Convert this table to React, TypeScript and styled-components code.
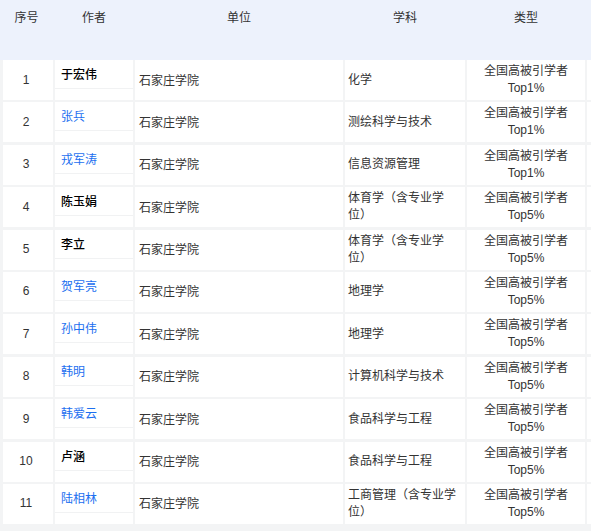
import React from "react";
import styled, { createGlobalStyle } from "styled-components";

const Global = createGlobalStyle`
  html, body { margin: 0; padding: 0; background: #f3f4f5; }
  body {
    font-family: "Liberation Sans", "Noto Sans CJK SC", sans-serif;
    font-size: 12px;
    color: #333;
    text-spacing-trim: space-all;
  }
`;

const COLS = "50px 78px 208px 120px 118px 1fr";

const Table = styled.div`
  width: 591px;
  display: flex;
  flex-direction: column;
  gap: 2.4px;
  background: #f3f4f5;
  padding-bottom: 6px;
`;

const HeaderRow = styled.div`
  display: grid;
  grid-template-columns: ${COLS};
  column-gap: 2px;
  padding-left: 3px;
  height: 60px;
  background: #edf2fc;
  margin-bottom: -2.4px;
`;

const HeadCell = styled.div<{ $shift?: number }>`
  text-align: center;
  padding-top: 9px;
  line-height: 18px;
  color: #333;
  margin-left: ${(p) => p.$shift ?? 0}px;
`;

const Row = styled.div`
  display: grid;
  grid-template-columns: ${COLS};
  column-gap: 2px;
  padding-left: 3px;
  height: 40px;
`;

const Cell = styled.div<{ $align?: string }>`
  background: #fff;
  display: flex;
  flex-direction: column;
  justify-content: center;
  align-items: ${(p) => (p.$align === "center" ? "center" : "flex-start")};
  text-align: ${(p) => (p.$align === "center" ? "center" : "left")};
  line-height: 17px;
  color: #333;
`;

const NumCell = styled(Cell)`
  padding-right: 4px;
`;

const UnitCell = styled(Cell)`
  padding-left: 4px;
  padding-top: 2px;
`;

const SubjectCell = styled(Cell)`
  padding: 0 0 0 3px;
  white-space: nowrap;
`;

const Line = styled.span`
  display: block;
`;

const AuthorCell = styled.div`
  background: #fff;
  display: flex;
  flex-direction: column;
`;

const NameBox = styled.div<{ $link?: boolean }>`
  height: 29px;
  box-sizing: border-box;
  padding: 7px 0 0 6px;
  line-height: 17px;
  border-bottom: 1px solid #f1f2f3;
  color: ${(p) => (p.$link ? "#1c6ff0" : "#000")};
  font-weight: ${(p) => (p.$link ? 400 : 500)};
`;

const Filler = styled.div`
  background: #fff;
`;

type Item = { n: number; name: string; link: boolean; subject: string[]; top: string };

const data: Item[] = [
  { n: 1, name: "于宏伟", link: false, subject: ["化学"], top: "Top1%" },
  { n: 2, name: "张兵", link: true, subject: ["测绘科学与技术"], top: "Top1%" },
  { n: 3, name: "戎军涛", link: true, subject: ["信息资源管理"], top: "Top1%" },
  { n: 4, name: "陈玉娟", link: false, subject: ["体育学（含专业学", "位）"], top: "Top5%" },
  { n: 5, name: "李立", link: false, subject: ["体育学（含专业学", "位）"], top: "Top5%" },
  { n: 6, name: "贺军亮", link: true, subject: ["地理学"], top: "Top5%" },
  { n: 7, name: "孙中伟", link: true, subject: ["地理学"], top: "Top5%" },
  { n: 8, name: "韩明", link: true, subject: ["计算机科学与技术"], top: "Top5%" },
  { n: 9, name: "韩爱云", link: true, subject: ["食品科学与工程"], top: "Top5%" },
  { n: 10, name: "卢涵", link: false, subject: ["食品科学与工程"], top: "Top5%" },
  { n: 11, name: "陆相林", link: true, subject: ["工商管理（含专业学", "位）"], top: "Top5%" },
];

export default function App() {
  return (
    <>
      <Global />
      <Table>
        <HeaderRow>
          <HeadCell $shift={-3}>序号</HeadCell>
          <HeadCell>作者</HeadCell>
          <HeadCell>单位</HeadCell>
          <HeadCell>学科</HeadCell>
          <HeadCell>类型</HeadCell>
          <HeadCell />
        </HeaderRow>
        {data.map((d) => (
          <Row key={d.n}>
            <NumCell $align="center">{d.n}</NumCell>
            <AuthorCell>
              <NameBox $link={d.link}>{d.name}</NameBox>
            </AuthorCell>
            <UnitCell>石家庄学院</UnitCell>
            <SubjectCell>
              {d.subject.map((l, i) => (
                <Line key={i}>{l}</Line>
              ))}
            </SubjectCell>
            <Cell $align="center">
              <Line>全国高被引学者</Line>
              <Line>{d.top}</Line>
            </Cell>
            <Filler />
          </Row>
        ))}
      </Table>
    </>
  );
}
